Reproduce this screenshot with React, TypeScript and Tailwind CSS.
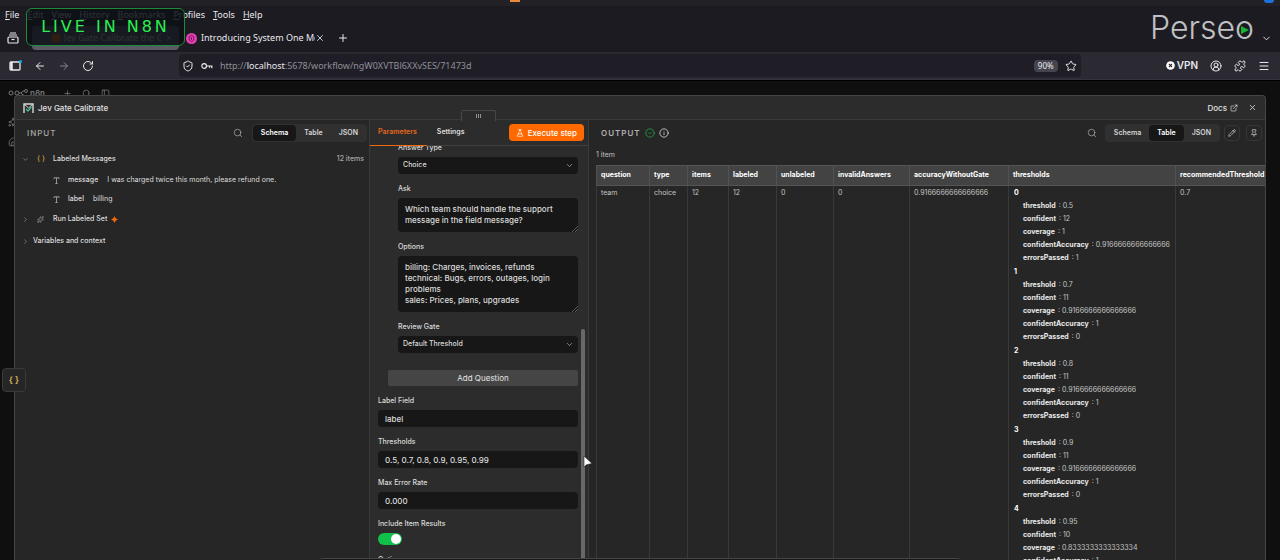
import { useState } from "react";
import type { ReactNode } from "react";
import {
  ArrowLeft,
  ArrowRight,
  ChevronDown,
  ChevronRight,
  CircleCheck,
  CircleUserRound,
  ExternalLink,
  FlaskConical,
  House,
  Info,
  Menu,
  PanelLeft,
  Pencil,
  Pin,
  Plus,
  Puzzle,
  RotateCw,
  Search,
  ShieldCheck,
  Sparkles,
  Star,
  X,
} from "lucide-react";

const menus = ["File", "Edit", "View", "History", "Bookmarks", "Profiles", "Tools", "Help"];

const views = ["Schema", "Table", "JSON"];

const thresholds = [
  { threshold: "0.5", confident: "12", coverage: "1", confidentAccuracy: "0.9166666666666666", errorsPassed: "1" },
  { threshold: "0.7", confident: "11", coverage: "0.9166666666666666", confidentAccuracy: "1", errorsPassed: "0" },
  { threshold: "0.8", confident: "11", coverage: "0.9166666666666666", confidentAccuracy: "1", errorsPassed: "0" },
  { threshold: "0.9", confident: "11", coverage: "0.9166666666666666", confidentAccuracy: "1", errorsPassed: "0" },
  { threshold: "0.95", confident: "10", coverage: "0.8333333333333334", confidentAccuracy: "1", errorsPassed: "0" },
];

const columns = [
  { name: "question", width: "w-[53px]", value: "team" },
  { name: "type", width: "w-[38px]", value: "choice" },
  { name: "items", width: "w-[41px]", value: "12" },
  { name: "labeled", width: "w-12", value: "12" },
  { name: "unlabeled", width: "w-[57px]", value: "0" },
  { name: "invalidAnswers", width: "w-[76px]", value: "0" },
  { name: "accuracyWithoutGate", width: "w-[99px]", value: "0.9166666666666666" },
  { name: "thresholds", width: "w-[167px]", value: null },
  { name: "recommendedThreshold", width: "w-[110px]", value: "0.7" },
];

function BrowserChrome() {
  return (
    <header className="shrink-0 bg-[#1c1b22] text-[#e8e8ec] font-['Noto_Sans',sans-serif]">
      <div className="flex h-[6px] items-start justify-between bg-[#222226] pr-[6px] pl-[510px]">
        <span className="h-[2px] w-[10px] bg-[#e8893a]" />
        <span className="h-[3px] w-[10px] rounded-b-full bg-[#1c71d8]" />
      </div>
      <nav className="flex h-[18px] items-center gap-2 pl-[5px] text-[9px]">
        {menus.map((menu) => (
          <button key={menu} className="leading-3">
            <u className="underline-offset-1">{menu[0]}</u>
            {menu.slice(1)}
          </button>
        ))}
      </nav>
      <div className="flex h-7 items-center">
        <div className="flex w-8 items-center pl-[7px]">
          <svg className="size-3" viewBox="0 0 12 12" fill="none" stroke="currentColor" strokeWidth="1.2">
            <path d="M3 1h6M2 3h8" />
            <rect x="1" y="5" width="10" height="6" rx="1" />
            <path d="M4.500 7.500h3" />
          </svg>
        </div>
        <div className="flex h-6 w-[147px] items-center gap-1 rounded bg-[#5b5b66] pl-5 text-[9px]">
          <span className="size-2 bg-[#ff6d00]" />
          <span className="grow overflow-hidden whitespace-nowrap">Jev Gate Calibrate the G</span>
          <X className="mr-[6px] size-2 shrink-0" />
        </div>
        <div className="flex w-[146px] items-center pl-[7px] text-[9px]">
          <svg className="mr-1 size-[11px] shrink-0" viewBox="0 0 12 12">
            <circle cx="6" cy="6" r="6" fill="#e640b4" />
            <path d="M6 2.500 8.500 4v3.500L6 9.500 3.500 7.500V4zM6 4.500v3" fill="none" stroke="#6b1152" />
          </svg>
          <span className="grow overflow-hidden whitespace-nowrap">Introducing System One Mo</span>
          <X className="size-[10px] shrink-0" />
        </div>
        <button aria-label="New tab" className="ml-3">
          <Plus className="size-3" />
        </button>
        <button aria-label="List all tabs" className="mr-2 ml-auto">
          <ChevronDown className="size-[11px]" />
        </button>
      </div>
      <div className="flex h-7 items-center border-b border-[#34333c] bg-[#2b2a33] pl-[9px]">
        <div className="flex w-[170px] items-center gap-3">
          <button aria-label="Sidebar" className="relative">
            <svg className="h-3 w-[13px]" viewBox="0 0 13 12" fill="none" stroke="currentColor" strokeWidth="1.300">
              <rect x="1" y="2" width="10" height="8" rx="1" />
              <path d="M2.500 2v8" strokeWidth="2.500" />
              <circle cx="11.500" cy="1.500" r="1.500" fill="#00b3f4" stroke="none" />
            </svg>
          </button>
          <button aria-label="Back">
            <ArrowLeft className="size-3" />
          </button>
          <button aria-label="Forward" className="text-[#85848c]">
            <ArrowRight className="size-3" />
          </button>
          <button aria-label="Reload">
            <RotateCw className="size-3" />
          </button>
        </div>
        <div className="mr-[85px] flex h-[23px] grow items-center gap-[7px] rounded bg-[#1f1e26] pr-1 pl-[3px]">
          <ShieldCheck className="size-3" />
          <svg className="h-[10px] w-3" viewBox="0 0 12 10" fill="none" stroke="currentColor" strokeWidth="1.200">
            <circle cx="3.200" cy="5" r="2.300" />
            <path d="M5.500 5H11.500M8.500 5v1.800M10.800 5v2.200" />
          </svg>
          <a href="#workflow" className="grow text-[9px] text-[#8f8e98]">
            http://<span className="text-[#e8e8ec]">localhost</span>:5678/workflow/ngW0XVTBl6XXvSES/71473d
          </a>
          <span className="rounded bg-[#46454f] px-1 text-[8px] leading-3">90%</span>
          <Star className="size-3" />
        </div>
        <div className="flex items-center gap-3 pr-[10px]">
          <span className="flex items-center gap-[2px] font-[Inter] text-[10px] font-semibold">
            <svg className="size-[9px]" viewBox="0 0 9 9">
              <circle cx="4.500" cy="4.500" r="4.300" fill="#fff" />
              <path d="M3 3l3 3M6 3L3 6" stroke="#2b2a33" strokeWidth="1.100" />
            </svg>
            VPN
          </span>
          <CircleUserRound className="size-3" />
          <Puzzle className="size-3" />
          <Menu className="size-3" />
        </div>
      </div>
    </header>
  );
}

function NodeIcon() {
  return (
    <svg className="h-[10px] w-[11px]" viewBox="0 0 11 10" fill="none">
      <path d="M1 10V1h9v9" stroke="#d8d8d8" strokeWidth="1.400" />
      <path d="M1 1l4.500 4L10 1" stroke="#d8d8d8" />
      <path d="M3 6l2 2 3.500-4" stroke="#3fc38e" strokeWidth="1.200" />
    </svg>
  );
}

function ViewSwitch({ initial }: { initial: string }) {
  const [view, setView] = useState(initial);

  return (
    <div className="flex rounded-sm bg-[#303030] p-px text-[7px] font-semibold text-[#d6d6d6]">
      {views.map((name) => (
        <button
          key={name}
          onClick={() => setView(name)}
          className={
            name === view
              ? "h-4 rounded-sm bg-[#171717] px-2 text-white"
              : "h-4 rounded-sm px-2"
          }
        >
          {name}
        </button>
      ))}
    </div>
  );
}

function TextTypeIcon() {
  return (
    <svg className="mr-2 size-[7px] text-[#a0a0a0]" viewBox="0 0 7 7" fill="none" stroke="currentColor" strokeWidth="0.900">
      <path d="M1 2V.8h5V2M3.500.8v5.700M2.300 6.500h2.400" />
    </svg>
  );
}

function InputPanel() {
  return (
    <section className="flex min-w-0 flex-col bg-[#262626] text-[#dedede]">
      <div className="flex h-[26px] items-center gap-[9px] pr-[2px] pl-3">
        <h2 className="mr-auto text-[8px] font-medium tracking-[1px] text-[#a8a8a8]">INPUT</h2>
        <Search className="size-[10px] text-[#9a9a9a]" />
        <ViewSwitch initial="Schema" />
      </div>
      <ul className="pt-[7px] pr-[5px] pl-[7px] text-[7px] font-medium">
        <li className="flex h-3 items-center">
          <ChevronDown className="size-[7px] text-[#a0a0a0]" />
          <span className="w-6 pl-2 text-[#d9a441]">{"{ }"}</span>
          <span className="grow">Labeled Messages</span>
          <span className="text-[#a8a8a8]">12 items</span>
        </li>
        <li className="mt-[9px] flex h-3 items-center pl-[31px]">
          <TextTypeIcon />
          <span className="mr-[9px]">message</span>
          <span className="font-normal">I was charged twice this month, please refund one.</span>
        </li>
        <li className="mt-[7px] flex h-3 items-center pl-[31px]">
          <TextTypeIcon />
          <span className="mr-[9px]">label</span>
          <span className="font-normal">billing</span>
        </li>
        <li className="mt-2 flex h-3 items-center">
          <ChevronRight className="size-[7px] text-[#a0a0a0]" />
          <span className="w-6 pl-2">
            <Sparkles className="size-[7px] text-[#a0a0a0]" />
          </span>
          <span>Run Labeled Set</span>
          <svg className="ml-1 size-[7px]" viewBox="0 0 8 8">
            <path d="M4 0l1.300 2.700L8 4 5.300 5.300 4 8 2.700 5.300 0 4l2.700-1.300z" fill="#f2690d" />
          </svg>
        </li>
        <li className="mt-[10px] flex h-3 items-center">
          <ChevronRight className="size-[7px] text-[#a0a0a0]" />
          <span className="pl-1">Variables and context</span>
        </li>
      </ul>
    </section>
  );
}

function Field({ id, label, children }: { id: string; label: string; children: ReactNode }) {
  return (
    <div className="flex flex-col gap-[3px]">
      <label htmlFor={id} className="text-[7px] leading-3 font-medium text-[#dcdcdc]">
        {label}
      </label>
      {children}
    </div>
  );
}

function SelectBox({ id, value }: { id: string; value: string }) {
  return (
    <div className="relative flex">
      <select
        id={id}
        defaultValue={value}
        className="h-[17px] w-full appearance-none rounded-sm bg-[#171717] px-[5px] text-[7px] font-medium text-[#dcdcdc]"
      >
        <option>{value}</option>
      </select>
      <ChevronDown className="pointer-events-none absolute top-1 right-1 size-[9px] text-[#a8a8a8]" />
    </div>
  );
}

function TextArea({ id, rows, value }: { id: string; rows: number; value: string }) {
  return (
    <div className="relative flex">
      <textarea
        id={id}
        rows={rows}
        defaultValue={value}
        className="w-full resize-none overflow-hidden rounded-sm bg-[#171717] px-[7px] py-[6px] text-[8px] leading-[11px] font-medium text-[#dcdcdc]"
      />
      <svg className="absolute right-0 bottom-0 size-[6px]" viewBox="0 0 6 6" stroke="#777" strokeWidth="0.700">
        <path d="M0 6L6 0M3 6l3-3" />
      </svg>
    </div>
  );
}

function TextBox({ id, value }: { id: string; value: string }) {
  return (
    <input
      id={id}
      defaultValue={value}
      className="h-[17px] w-full rounded-sm bg-[#171717] px-[7px] text-[8px] font-medium text-[#dcdcdc]"
    />
  );
}

function ParametersPanel() {
  const [includeResults, setIncludeResults] = useState(true);

  return (
    <section className="flex min-h-0 flex-col border-x border-[#3a3a3a] bg-[#2c2c2c]">
      <div className="flex h-[26px] shrink-0 items-center border-b border-[#404040] pr-1 text-[7px] font-semibold">
        <button className="h-[26px] border-b border-[#f2690d] pr-[10px] pl-2 text-[#e8671b]">Parameters</button>
        <button className="px-[10px] text-[#dcdcdc]">Settings</button>
        <button className="ml-auto flex h-[17px] items-center gap-1 rounded-sm bg-[#ff6900] px-[7px] text-[8px] font-medium text-white">
          <FlaskConical className="size-2" />
          Execute step
        </button>
      </div>
      <div className="flex min-h-0 grow overflow-hidden">
        <form className="-mt-1 flex min-w-0 grow flex-col gap-[9px] pl-2">
          <div className="flex flex-col gap-[9px] pl-5">
            <Field id="answer-type" label="Answer Type">
              <SelectBox id="answer-type" value="Choice" />
            </Field>
            <Field id="ask" label="Ask">
              <TextArea id="ask" rows={2} value="Which team should handle the support message in the field message?" />
            </Field>
            <Field id="options" label="Options">
              <TextArea
                id="options"
                rows={4}
                value={
                  "billing: Charges, invoices, refunds\ntechnical: Bugs, errors, outages, login problems\nsales: Prices, plans, upgrades"
                }
              />
            </Field>
            <Field id="review-gate" label="Review Gate">
              <SelectBox id="review-gate" value="Default Threshold" />
            </Field>
          </div>
          <button
            type="button"
            className="mt-2 ml-[10px] h-4 shrink-0 rounded-xs bg-[#454545] text-[8px] text-[#e4e4e4]"
          >
            Add Question
          </button>
          <Field id="label-field" label="Label Field">
            <TextBox id="label-field" value="label" />
          </Field>
          <Field id="thresholds" label="Thresholds">
            <TextBox id="thresholds" value="0.5, 0.7, 0.8, 0.9, 0.95, 0.99" />
          </Field>
          <Field id="max-error-rate" label="Max Error Rate">
            <TextBox id="max-error-rate" value="0.000" />
          </Field>
          <Field id="include-results" label="Include Item Results">
            <input
              id="include-results"
              type="checkbox"
              role="switch"
              checked={includeResults}
              onChange={(e) => setIncludeResults(e.target.checked)}
              className="flex h-3 w-6 appearance-none items-center rounded-full bg-[#555] px-px before:size-[10px] before:rounded-full before:bg-white checked:justify-end checked:bg-[#0fc04b]"
            />
          </Field>
          <p className="text-[7px] leading-3 font-medium text-[#dcdcdc]">Options</p>
        </form>
        <div className="flex w-[10px] shrink-0 flex-col items-center pt-[183px]">
          <div className="w-1 grow rounded-t-full bg-[#686868]" />
        </div>
      </div>
    </section>
  );
}

function ThresholdList() {
  return (
    <ul className="leading-[13px]">
      {thresholds.map((entry, index) => (
        <li key={index} className="pb-px">
          <p className="pl-px font-bold text-white">{index}</p>
          <dl className="pl-[10px]">
            {Object.entries(entry).map(([key, value]) => (
              <div key={key} className="flex gap-[3px]">
                <dt className="font-bold text-[#e8e8e8]">{key}</dt>
                <dd>: {value}</dd>
              </div>
            ))}
          </dl>
        </li>
      ))}
    </ul>
  );
}

function OutputPanel() {
  return (
    <section className="flex min-h-0 min-w-0 flex-col overflow-hidden bg-[#262626] text-[#c4c4c4]">
      <div className="flex h-[26px] shrink-0 items-center gap-1 pr-[3px] pl-3">
        <h2 className="text-[8px] font-semibold tracking-[1px] text-[#b0b0b0]">OUTPUT</h2>
        <CircleCheck className="size-[10px] text-[#1fa34a]" />
        <Info className="mr-auto size-[10px] text-[#d6d6d6]" />
        <Search className="mr-1 size-[10px] text-[#9a9a9a]" />
        <ViewSwitch initial="Table" />
        <div className="flex gap-[6px]">
          <button aria-label="Edit output" className="flex size-4 items-center justify-center rounded-sm border border-[#363636]">
            <Pencil className="size-2 text-[#dcdcdc]" />
          </button>
          <button aria-label="Pin data" className="flex size-4 items-center justify-center rounded-sm border border-[#363636]">
            <Pin className="size-2 text-[#dcdcdc]" />
          </button>
        </div>
      </div>
      <p className="px-[7px] pt-[3px] text-[7px] leading-3">1 item</p>
      <div className="mt-1 min-h-0 grow overflow-hidden pl-[7px]">
        <table className="w-[689px] table-fixed border-collapse text-left text-[7px]">
          <thead>
            <tr className="h-5 border-y border-[#555] bg-[#434343] text-white">
              {columns.map((column) => (
                <th key={column.name} className={`${column.width} border-l border-[#525252] px-1 font-bold`}>
                  {column.name}
                </th>
              ))}
            </tr>
          </thead>
          <tbody>
            <tr className="h-[460px] align-top">
              {columns.map((column) => (
                <td key={column.name} className="border-l border-[#393939] px-1 leading-[13px]">
                  {column.value ?? <ThresholdList />}
                </td>
              ))}
            </tr>
          </tbody>
        </table>
      </div>
    </section>
  );
}

function NodeDialog() {
  return (
    <div
      role="dialog"
      aria-label="Jev Gate Calibrate"
      className="absolute inset-x-[14px] top-[14px] bottom-0 flex flex-col rounded-t border-x border-t border-[#454545] bg-[#2c2c2c]"
    >
      <div className="flex h-6 shrink-0 items-center gap-1 border-b border-[#3a3a3a] px-2 text-[8px] font-medium text-[#e0e0e0]">
        <NodeIcon />
        <h1 className="mr-auto">Jev Gate Calibrate</h1>
        <a href="#docs" className="flex items-center gap-[3px]">
          Docs
          <ExternalLink className="size-2" />
        </a>
        <button aria-label="Close" className="ml-[6px]">
          <X className="size-[9px]" />
        </button>
      </div>
      <div className="absolute top-[14px] left-[446px] flex h-[11px] w-[35px] items-center justify-center rounded-t-xs border-x border-t border-[#484848] bg-[#2c2c2c]">
        <div className="flex gap-px">
          <span className="h-1 w-px bg-[#909090]" />
          <span className="h-1 w-px bg-[#909090]" />
          <span className="h-1 w-px bg-[#909090]" />
        </div>
      </div>
      <div className="grid min-h-0 grow grid-cols-[minmax(0,354fr)_220px_minmax(0,676fr)] grid-rows-[minmax(0,1fr)]">
        <InputPanel />
        <ParametersPanel />
        <OutputPanel />
      </div>
    </div>
  );
}

export default function App() {
  return (
    <div className="relative flex h-screen flex-col overflow-hidden bg-[#0f0f0f] font-[Inter,sans-serif]">
      <BrowserChrome />
      <main className="relative min-h-0 grow border-t border-black">
        <div className="flex h-6 items-center gap-[10px] pl-2 text-[#77777a]">
          <svg className="h-2 w-5" viewBox="0 0 20 8" fill="none" stroke="currentColor">
            <circle cx="3" cy="4" r="2" />
            <circle cx="9" cy="4" r="2" />
            <path d="M11 4h2l2-2h1M13 4l2 2h1" />
            <circle cx="18" cy="2" r="1.500" />
          </svg>
          <span className="-ml-2 text-[8px] font-semibold">n8n</span>
          <Plus className="ml-2 size-[9px]" />
          <Search className="size-[9px]" />
          <PanelLeft className="size-[9px]" />
        </div>
        <div className="flex flex-col gap-[10px] pt-3 pl-2 text-[#77777a]">
          <Sparkles className="size-[10px]" />
          <House className="size-[10px]" />
        </div>
        <NodeDialog />
        <button
          aria-label="Labeled Messages"
          className="absolute top-[287px] left-[2px] flex size-6 items-center justify-center rounded-sm border border-[#3a3a3a] bg-[#262626] text-[9px] font-semibold text-[#d9b25c]"
        >
          {"{ }"}
        </button>
      </main>
      <div className="absolute top-2 left-[26px] flex h-[38px] w-[159px] items-center justify-center rounded-md border border-[#1b8a3a] bg-[#0c0f14]/85 font-['DejaVu_Sans',sans-serif] text-base tracking-[3px] text-[#2bef52]">
        LIVE IN N8N
      </div>
      <div className="absolute top-[10px] right-[26px] flex text-[32px] leading-9 font-light text-[#c0c0c4]">
        Perse
        <span className="relative">
          o
          <svg className="absolute top-4 left-[6px] size-2" viewBox="0 0 8 8">
            <path d="M0 0l8 4-8 4z" fill="#17b533" />
          </svg>
        </span>
      </div>
      <div className="absolute bottom-0 left-1/4 h-[2px] w-1/2 rounded-t border-t border-[#454545] bg-[#1a171a]" />
      <svg className="absolute top-[455px] left-[583px] h-[14px] w-[10px]" viewBox="0 0 10 14">
        <path d="M1 1v11l2.500-2.300L9 8.500z" fill="#fff" stroke="#222" strokeWidth="0.600" />
      </svg>
    </div>
  );
}
